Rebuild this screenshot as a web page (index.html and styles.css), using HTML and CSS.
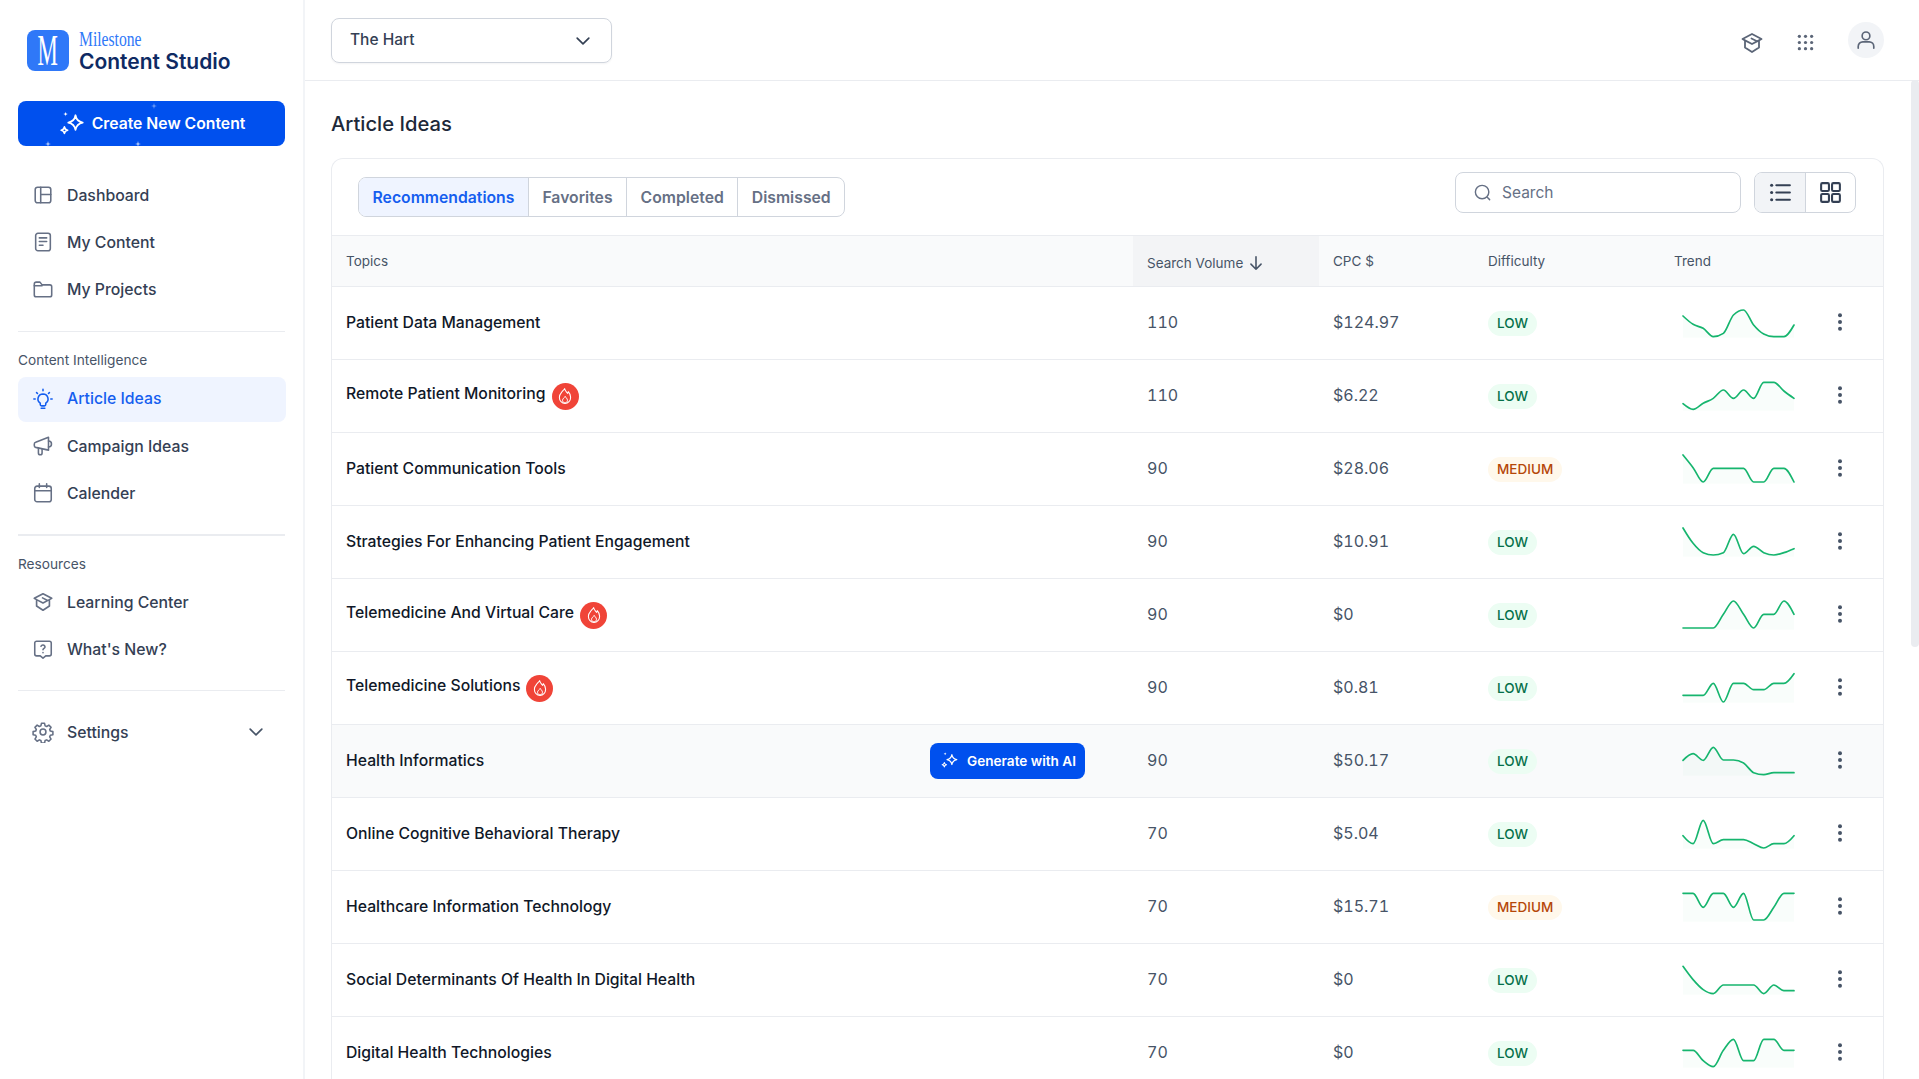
FILE: index.html
```html
<!DOCTYPE html>
<html lang="en">
<head>
    <meta charset="UTF-8">
    <meta name="viewport" content="width=device-width, initial-scale=1.0">
    <title>Article Ideas - Content Studio</title>
    <link rel="stylesheet" href="styles.css">
</head>
<body>
    <svg class="sprite" width="0" height="0">
        <symbol id="i-sparkles" viewBox="0 0 24 24">
            <path d="M15 4.500c.7 3.900 2.300 5.600 6.200 6.300-3.900.7-5.500 2.400-6.200 6.300-.7-3.900-2.300-5.600-6.200-6.300 3.900-.7 5.500-2.400 6.200-6.300z" fill="none" stroke="currentColor" stroke-width="1.500" stroke-linejoin="round"/>
            <path d="M5.500 14.500c.3 1.800 1 2.500 2.800 2.800-1.800.3-2.500 1-2.800 2.800-.3-1.800-1-2.500-2.800-2.800 1.800-.3 2.500-1 2.800-2.800z" fill="none" stroke="currentColor" stroke-width="1.400" stroke-linejoin="round"/>
            <path d="M6.500 1.500c.2 1.300.7 1.800 2 2-1.300.2-1.800.7-2 2-.2-1.300-.7-1.800-2-2 1.300-.2 1.800-.7 2-2z" fill="currentColor"/>
        </symbol>
        <symbol id="i-cap" viewBox="0 0 24 24">
            <path d="M2.500 8 12 3l9.500 5-2.500 1.400v7L12 21l-7-4.600v-7z M5 9.400 12 13l7-3.600 M17 10.300 11.500 7.500" fill="none" stroke="currentColor" stroke-width="1.800" stroke-linejoin="round" stroke-linecap="round"/>
        </symbol>
        <symbol id="i-chevron" viewBox="0 0 24 24">
            <path d="M5 8.500l7 7 7-7" fill="none" stroke="currentColor" stroke-width="2" stroke-linecap="round" stroke-linejoin="round"/>
        </symbol>
        <symbol id="i-flame" viewBox="0 0 24 24">
            <path d="M11.500 2C12 5 14 6.500 15.500 8.500c.5-.6.8-1.300.9-2.300 1.800 2 3.100 4.300 3.100 7.300 0 4.700-3.300 8.500-7.500 8.500s-7.500-3.800-7.500-8.500c0-3 1.700-5 3.200-6.800 1.700-2 3.500-3.400 3.800-4.700z" fill="none" stroke="currentColor" stroke-width="1.400" stroke-linejoin="round"/>
            <path d="M12.300 12.500c.5 1.700 3 2.700 3 5.300 0 1.900-1.500 3.300-3.300 3.300s-3.300-1.400-3.300-3.300c0-2.400 2.500-3.300 3.600-5.300z" fill="none" stroke="currentColor" stroke-width="1.300" stroke-linejoin="round"/>
        </symbol>
        <symbol id="i-kebab" viewBox="0 0 16 24">
            <circle cx="8" cy="5.300" r="2" fill="currentColor"/>
            <circle cx="8" cy="12" r="2" fill="currentColor"/>
            <circle cx="8" cy="18.700" r="2" fill="currentColor"/>
        </symbol>
    </svg>

    <div class="app">
        <aside class="sidebar">
            <div class="brand">
                <span class="brand-mark"><span>M</span></span>
                <div class="brand-text">
                    <span class="brand-top">Milestone</span>
                    <span class="brand-name">Content Studio</span>
                </div>
            </div>

            <button class="create-btn">
                <svg class="create-icon"><use href="#i-sparkles"/></svg>
                Create New Content
                <span class="twinkle twinkle-a"></span>
                <span class="twinkle twinkle-b"></span>
                <span class="twinkle twinkle-c"></span>
            </button>

            <nav class="nav nav-first">
                <a class="nav-item">
                    <svg class="nav-icon" viewBox="0 0 24 24"><rect x="3.500" y="3.500" width="17" height="17" rx="2.500"/><path d="M9.500 3.500v17M9.500 11.500h11"/></svg>
                    Dashboard
                </a>
                <a class="nav-item">
                    <svg class="nav-icon" viewBox="0 0 24 24"><rect x="4" y="2.500" width="16" height="19" rx="2.500"/><path d="M8 7.500h8M8 11.500h8M8 15.500h4"/></svg>
                    My Content
                </a>
                <a class="nav-item">
                    <svg class="nav-icon" viewBox="0 0 24 24"><path d="M2.500 6.500a2 2 0 0 1 2-2h4.200l2.300 3h8.500a2 2 0 0 1 2 2v9a2 2 0 0 1-2 2h-15a2 2 0 0 1-2-2z"/><path d="M2.500 8.500h8.500"/></svg>
                    My Projects
                </a>
            </nav>

            <hr class="divider">
            <div class="nav-label">Content Intelligence</div>
            <nav class="nav">
                <a class="nav-item active">
                    <svg class="nav-icon" viewBox="0 0 24 24"><path d="M12 6.500a5.500 5.500 0 0 0-3 10.100V18a1.500 1.500 0 0 0 1.500 1.500h3A1.500 1.500 0 0 0 15 18v-1.400a5.500 5.500 0 0 0-3-10.100z"/><path d="M10 22h4M12 1.500v1.500M2 12h1.500M20.500 12H22M5 5l1 1M19 5l-1 1"/></svg>
                    Article Ideas
                </a>
                <a class="nav-item">
                    <svg class="nav-icon" viewBox="0 0 24 24"><path d="M4 8 18 2.500v14L4 13.500a2 2 0 0 1-1.500-2v-1.500A2 2 0 0 1 4 8z"/><path d="M18 6.500a3.200 3.200 0 0 1 0 6.500M7 14.200v5.300a2 2 0 0 0 4 0v-4.500"/></svg>
                    Campaign Ideas
                </a>
                <a class="nav-item">
                    <svg class="nav-icon" viewBox="0 0 24 24"><rect x="3" y="4.500" width="18" height="17" rx="2.500"/><path d="M3 9.500h18M8 2v4M16 2v4"/></svg>
                    Calender
                </a>
            </nav>

            <hr class="divider divider-thick">
            <div class="nav-label nav-label-tight">Resources</div>
            <nav class="nav">
                <a class="nav-item">
                    <svg class="nav-icon nav-cap"><use href="#i-cap"/></svg>
                    Learning Center
                </a>
                <a class="nav-item">
                    <svg class="nav-icon" viewBox="0 0 24 24"><path d="M5 3.500h14a2 2 0 0 1 2 2v12a2 2 0 0 1-2 2h-4l-3 2.500-3-2.500H5a2 2 0 0 1-2-2v-12a2 2 0 0 1 2-2z"/><path d="M9.800 9a2.300 2.300 0 0 1 4.400.7c0 1.500-2.200 1.800-2.200 3.100"/><path d="M12 15.800v.2"/></svg>
                    What's New?
                </a>
            </nav>

            <hr class="divider divider-last">
            <a class="nav-item settings">
                <svg class="nav-icon" viewBox="0 0 24 24"><circle cx="12" cy="12" r="3.200"/><path d="M10.300 2.500h3.400l.6 2.800 1.700.7 2.400-1.500 2.400 2.400-1.500 2.400.7 1.700 2.800.6v3.400l-2.800.6-.7 1.700 1.500 2.400-2.400 2.400-2.400-1.500-1.700.7-.6 2.800h-3.400l-.6-2.800-1.700-.7-2.400 1.500-2.400-2.400 1.500-2.400-.7-1.700-2.800-.6v-3.400l2.800-.6.7-1.700-1.500-2.400 2.400-2.400 2.400 1.500 1.700-.7z"/></svg>
                Settings
                <svg class="settings-chevron"><use href="#i-chevron"/></svg>
            </a>
        </aside>

        <div class="main">
            <header class="topbar">
                <div class="site-select">
                    The Hart
                    <svg class="site-chevron"><use href="#i-chevron"/></svg>
                </div>
                <div class="topbar-actions">
                    <svg class="top-icon"><use href="#i-cap"/></svg>
                    <svg class="top-icon grid-icon" viewBox="0 0 18 18">
                        <circle cx="2.500" cy="2.500" r="1.700"/><circle cx="9" cy="2.500" r="1.700"/><circle cx="15.500" cy="2.500" r="1.700"/>
                        <circle cx="2.500" cy="9" r="1.700"/><circle cx="9" cy="9" r="1.700"/><circle cx="15.500" cy="9" r="1.700"/>
                        <circle cx="2.500" cy="15.500" r="1.700"/><circle cx="9" cy="15.500" r="1.700"/><circle cx="15.500" cy="15.500" r="1.700"/>
                    </svg>
                    <div class="avatar">
                        <svg viewBox="0 0 24 24"><circle cx="12" cy="7.500" r="4.200"/><path d="M3.500 21v-2a5 5 0 0 1 5-5h7a5 5 0 0 1 5 5v2"/></svg>
                    </div>
                </div>
            </header>

            <main class="content">
                <h1 class="page-title">Article Ideas</h1>
                <section class="card">
                    <div class="toolbar">
                        <div class="tabs">
                            <span class="tab active">Recommendations</span>
                            <span class="tab">Favorites</span>
                            <span class="tab">Completed</span>
                            <span class="tab">Dismissed</span>
                        </div>
                        <div class="search">
                            <svg class="search-icon" viewBox="0 0 24 24"><circle cx="11.500" cy="11.500" r="8.500"/><path d="M18 18l3 3"/></svg>
                            Search
                        </div>
                        <div class="view-toggle">
                            <span class="view-btn active">
                                <svg viewBox="0 0 24 24"><path d="M8 5h13M8 12h13M8 19h13"/><circle cx="3.500" cy="5" r="1.500"/><circle cx="3.500" cy="12" r="1.500"/><circle cx="3.500" cy="19" r="1.500"/></svg>
                            </span>
                            <span class="view-btn">
                                <svg viewBox="0 0 24 24"><rect x="3" y="3" width="7.500" height="7.500" rx="1.200"/><rect x="13.500" y="3" width="7.500" height="7.500" rx="1.200"/><rect x="3" y="13.500" width="7.500" height="7.500" rx="1.200"/><rect x="13.500" y="13.500" width="7.500" height="7.500" rx="1.200"/></svg>
                            </span>
                        </div>
                    </div>

                    <table class="ideas">
                        <colgroup>
                            <col class="col-topic"><col class="col-volume"><col class="col-cpc"><col class="col-difficulty"><col class="col-trend"><col>
                        </colgroup>
                        <thead>
                            <tr>
                                <th>Topics</th>
                                <th class="sorted"><span class="sort-label">Search Volume
                                    <svg viewBox="0 0 16 16"><path d="M8 2.500v11M3.500 9 8 13.500 12.500 9"/></svg></span></th>
                                <th>CPC $</th>
                                <th>Difficulty</th>
                                <th>Trend</th>
                                <th></th>
                            </tr>
                        </thead>
                        <tbody>
                            <tr>
                                <td class="topic">Patient Data Management</td>
                                <td class="num">110</td>
                                <td class="num">$124.97</td>
                                <td><span class="pill low">LOW</span></td>
                                <td class="trend"><svg class="spark" viewBox="0 0 333 96" data-points="27,52,64,89,79,24,9,54,81,89,89,54"></svg></td>
                                <td class="more"><svg><use href="#i-kebab"/></svg></td>
                            </tr>
                            <tr>
                                <td class="topic"><div class="topic-hot">Remote Patient Monitoring <span class="hot"><svg><use href="#i-flame"/></svg></span></div></td>
                                <td class="num">110</td>
                                <td class="num">$6.22</td>
                                <td><span class="pill low">LOW</span></td>
                                <td class="trend"><svg class="spark" viewBox="0 0 333 96" data-points="71,88,70,55,30,55,30,55,7,7,33,55"></svg></td>
                                <td class="more"><svg><use href="#i-kebab"/></svg></td>
                            </tr>
                            <tr>
                                <td class="topic">Patient Communication Tools</td>
                                <td class="num">90</td>
                                <td class="num">$28.06</td>
                                <td><span class="pill medium">MEDIUM</span></td>
                                <td class="trend"><svg class="spark" viewBox="0 0 333 96" data-points="6,44,87,46,46,46,46,87,87,46,46,87"></svg></td>
                                <td class="more"><svg><use href="#i-kebab"/></svg></td>
                            </tr>
                            <tr>
                                <td class="topic">Strategies For Enhancing Patient Engagement</td>
                                <td class="num">90</td>
                                <td class="num">$10.91</td>
                                <td><span class="pill low">LOW</span></td>
                                <td class="trend"><svg class="spark" viewBox="0 0 333 96" data-points="6,52,80,87,80,25,83,61,80,87,80,68"></svg></td>
                                <td class="more"><svg><use href="#i-kebab"/></svg></td>
                            </tr>
                            <tr>
                                <td class="topic"><div class="topic-hot">Telemedicine And Virtual Care <span class="hot"><svg><use href="#i-flame"/></svg></span></div></td>
                                <td class="num">90</td>
                                <td class="num">$0</td>
                                <td><span class="pill low">LOW</span></td>
                                <td class="trend"><svg class="spark" viewBox="0 0 333 96" data-points="87,87,87,87,46,6,46,87,46,46,6,46"></svg></td>
                                <td class="more"><svg><use href="#i-kebab"/></svg></td>
                            </tr>
                            <tr>
                                <td class="topic"><div class="topic-hot">Telemedicine Solutions <span class="hot"><svg><use href="#i-flame"/></svg></span></div></td>
                                <td class="num">90</td>
                                <td class="num">$0.81</td>
                                <td><span class="pill low">LOW</span></td>
                                <td class="trend"><svg class="spark" viewBox="0 0 333 96" data-points="70,70,70,34,90,34,34,53,53,34,34,5"></svg></td>
                                <td class="more"><svg><use href="#i-kebab"/></svg></td>
                            </tr>
                            <tr class="hovered">
                                <td class="topic"><div class="topic-action">Health Informatics
                                    <button class="generate-btn"><svg><use href="#i-sparkles"/></svg>Generate with AI</button></div></td>
                                <td class="num">90</td>
                                <td class="num">$50.17</td>
                                <td><span class="pill low">LOW</span></td>
                                <td class="trend"><svg class="spark" viewBox="0 0 333 96" data-points="46,26,46,7,45,45,54,83,89,83,83,83"></svg></td>
                                <td class="more"><svg><use href="#i-kebab"/></svg></td>
                            </tr>
                            <tr>
                                <td class="topic">Online Cognitive Behavioral Therapy</td>
                                <td class="num">70</td>
                                <td class="num">$5.04</td>
                                <td><span class="pill low">LOW</span></td>
                                <td class="trend"><svg class="spark" viewBox="0 0 333 96" data-points="53,77,7,77,65,65,65,77,90,77,77,53"></svg></td>
                                <td class="more"><svg><use href="#i-kebab"/></svg></td>
                            </tr>
                            <tr>
                                <td class="topic">Healthcare Information Technology</td>
                                <td class="num">70</td>
                                <td class="num">$15.71</td>
                                <td><span class="pill medium">MEDIUM</span></td>
                                <td class="trend"><svg class="spark" viewBox="0 0 333 96" data-points="7,7,49,7,7,49,7,87,87,49,7,7"></svg></td>
                                <td class="more"><svg><use href="#i-kebab"/></svg></td>
                            </tr>
                            <tr>
                                <td class="topic">Social Determinants Of Health In Digital Health</td>
                                <td class="num">70</td>
                                <td class="num">$0</td>
                                <td><span class="pill low">LOW</span></td>
                                <td class="trend"><svg class="spark" viewBox="0 0 333 96" data-points="7,47,77,89,63,63,63,63,89,63,80,80"></svg></td>
                                <td class="more"><svg><use href="#i-kebab"/></svg></td>
                            </tr>
                            <tr>
                                <td class="topic">Digital Health Technologies</td>
                                <td class="num">70</td>
                                <td class="num">$0</td>
                                <td><span class="pill low">LOW</span></td>
                                <td class="trend"><svg class="spark" viewBox="0 0 333 96" data-points="40,40,71,89,40,7,71,71,7,7,40,40"></svg></td>
                                <td class="more"><svg><use href="#i-kebab"/></svg></td>
                            </tr>
                        </tbody>
                    </table>
                </section>
            </main>
            <div class="scroll-thumb"></div>
        </div>
    </div>
    <script src="sparkline.js"></script>
</body>
</html>
```

FILE: styles.css
```css
* {
    box-sizing: border-box;
}

html, body {
    height: 100%;
}

body {
    margin: 0;
    background-color: #fff;
    color: #101828;
    font-family: Inter, "Noto Sans", sans-serif;
    overflow: hidden;
}

.sprite {
    position: absolute;
}

.app {
    display: flex;
    height: 100vh;
}

/* sidebar */
.sidebar {
    flex: 0 0 305px;
    width: 305px;
    padding: 29px 18px 0;
    border-right: 2px solid #f2f4f7;
}

.brand {
    display: flex;
    align-items: flex-start;
    gap: 10px;
    padding-left: 9px;
}

.brand-mark {
    width: 42px;
    height: 41px;
    margin-top: 1px;
    border-radius: 8px;
    background-color: #2f78f8;
    color: #fff;
    font-family: "Liberation Serif", serif;
    font-size: 44px;
    line-height: 41px;
    text-align: center;
}

.brand-mark span {
    display: inline-block;
    transform: scaleX(0.52);
}

.brand-text {
    display: flex;
    flex-direction: column;
}

.brand-top {
    height: 20px;
    color: #2f78f8;
    font-family: "Liberation Serif", serif;
    font-size: 22px;
    line-height: 20px;
    transform: scaleX(0.71);
    transform-origin: left center;
}

.brand-name {
    color: #0e2a63;
    font-size: 21px;
    font-weight: 600;
    line-height: 25px;
}

.create-btn {
    position: relative;
    display: flex;
    align-items: center;
    justify-content: center;
    gap: 6px;
    width: 267px;
    height: 45px;
    margin-top: 27px;
    border: none;
    border-radius: 8px;
    background-color: #0050ee;
    color: #fff;
    font-family: inherit;
    font-size: 15.750px;
    font-weight: 600;
}

.create-icon {
    width: 28px;
    height: 28px;
}

.twinkle {
    position: absolute;
    width: 6px;
    height: 6px;
    background-color: #7ea6f7;
    clip-path: polygon(50% 0, 60% 40%, 100% 50%, 60% 60%, 50% 100%, 40% 60%, 0 50%, 40% 40%);
}

.twinkle-a {
    left: 27px;
    bottom: -1px;
    background-color: #cfdefc;
}

.twinkle-b {
    left: 117px;
    bottom: -1px;
    background-color: #cfdefc;
}

.twinkle-c {
    left: 133px;
    top: 2px;
}

.nav {
    display: flex;
    flex-direction: column;
    gap: 3px;
}

.nav-first {
    margin-top: 27px;
}

.nav-item {
    display: flex;
    align-items: center;
    gap: 13px;
    height: 44px;
    padding-left: 14px;
    border-radius: 8px;
    color: #344054;
    font-size: 15.800px;
    font-weight: 450;
}

.nav-icon {
    flex: 0 0 22px;
    width: 22px;
    height: 22px;
    fill: none;
    stroke: #667085;
    stroke-width: 1.700;
    stroke-linecap: round;
    stroke-linejoin: round;
    color: #667085;
}

.nav-cap {
    stroke: none;
}

.nav-item.active {
    height: 45px;
    margin: 0 -1px -1px 0;
    padding-bottom: 2px;
    background-color: #eff4ff;
    color: #155eef;
}

.nav-item.active .nav-icon {
    stroke: #155eef;
}

.divider {
    height: 1px;
    margin: 20px 0 0;
    border: none;
    background-color: #eaecf0;
}

.divider-thick {
    height: 2px;
    margin-top: 19px;
}

.divider-last {
    margin-top: 19px;
}

.nav-label {
    margin: 20px 0 8px;
    color: #475467;
    font-size: 13.700px;
    font-weight: 400;
    line-height: 17px;
}

.nav-label-tight {
    margin-bottom: 7px;
}

.settings {
    margin-top: 19px;
}

.settings-chevron {
    width: 20px;
    height: 20px;
    margin-left: auto;
    margin-right: 19px;
    color: #475467;
}

/* main column */
.main {
    position: relative;
    flex: 1;
    display: flex;
    flex-direction: column;
    min-width: 0;
}

.topbar {
    flex: 0 0 81px;
    display: flex;
    align-items: flex-start;
    justify-content: space-between;
    padding: 18px 35px 0 26px;
    border-bottom: 1px solid #eaecf0;
}

.site-select {
    display: flex;
    align-items: center;
    justify-content: space-between;
    width: 281px;
    height: 45px;
    padding: 0 18px 2px;
    border: 1px solid #d0d5dd;
    border-radius: 8px;
    box-shadow: 0 1px 2px rgba(16, 24, 40, 0.05);
    color: #344054;
    font-size: 15.500px;
    font-weight: 500;
}

.site-chevron {
    width: 20px;
    height: 20px;
    margin-top: 2px;
    color: #344054;
}

.topbar-actions {
    display: flex;
    align-items: center;
    margin-top: 4px;
}

.top-icon {
    width: 24px;
    height: 24px;
    margin-top: 5px;
    color: #5b6577;
}

.grid-icon {
    width: 17px;
    height: 17px;
    margin-left: 33px;
    fill: #5b6577;
}

.avatar {
    display: flex;
    align-items: center;
    justify-content: center;
    width: 36px;
    height: 36px;
    margin-left: 34px;
    border-radius: 50%;
    background-color: #f2f4f7;
}

.avatar svg {
    width: 22px;
    height: 22px;
    fill: none;
    stroke: #5b6577;
    stroke-width: 1.800;
    stroke-linecap: round;
}

.content {
    flex: 1;
    min-height: 0;
    padding: 0 35px 0 26px;
    overflow: hidden;
}

/* drawn by hand, the browser hides its own bar */
.scroll-thumb {
    position: absolute;
    top: 80px;
    right: 0;
    width: 8px;
    height: 567px;
    border-radius: 4px;
    background-color: #eaecf0;
}

.page-title {
    margin: 30px 0 0;
    color: #1d2939;
    font-size: 20.200px;
    font-weight: 500;
    line-height: 26px;
}

.card {
    margin-top: 21px;
    border: 1px solid #eaecf0;
    border-bottom: none;
    border-radius: 12px 12px 0 0;
    overflow: hidden;
}

.toolbar {
    display: flex;
    align-items: flex-start;
    height: 76px;
    padding: 13px 27px 0 27px;
}

.tabs {
    display: flex;
    height: 40px;
    margin-top: 5px;
    margin-left: -1px;
    border: 1px solid #d0d5dd;
    border-radius: 8px;
    overflow: hidden;
}

.tab {
    padding: 0 13.500px;
    border-left: 1px solid #d0d5dd;
    color: #667085;
    font-size: 15.750px;
    font-weight: 600;
    line-height: 39px;
}

.tab:first-child {
    border-left: none;
}

.tab.active {
    background-color: #eff4ff;
    color: #155eef;
}

.search {
    display: flex;
    align-items: center;
    gap: 10px;
    width: 286px;
    height: 41px;
    margin-left: auto;
    padding-left: 17px;
    border: 1px solid #d0d5dd;
    border-radius: 8px;
    color: #667085;
    font-size: 15.500px;
}

.search-icon {
    width: 19px;
    height: 19px;
    fill: none;
    stroke: #667085;
    stroke-width: 1.800;
    stroke-linecap: round;
}

.view-toggle {
    display: flex;
    height: 41px;
    margin-left: 13px;
    border: 1px solid #d0d5dd;
    border-radius: 8px;
    overflow: hidden;
}

.view-btn {
    display: flex;
    align-items: center;
    justify-content: center;
    width: 50px;
}

.view-btn + .view-btn {
    border-left: 1px solid #d0d5dd;
}

.view-btn.active {
    background-color: #f2f4f7;
}

.view-btn svg {
    width: 25px;
    height: 25px;
    fill: none;
    stroke: #344054;
    stroke-width: 2;
    stroke-linecap: round;
}

.view-btn circle {
    fill: #344054;
    stroke: none;
}

/* table */
.ideas {
    width: 100%;
    border-spacing: 0;
    table-layout: fixed;
}

.col-topic {
    width: 801px;
}

.col-volume {
    width: 186px;
}

.col-cpc {
    width: 155px;
}

.col-difficulty {
    width: 186px;
}

.col-trend {
    width: 150px;
}

.ideas th {
    height: 52px;
    padding: 0 14px 1px;
    border-top: 1px solid #eaecf0;
    border-bottom: 1px solid #eaecf0;
    background-color: #f9fafb;
    color: #475467;
    font-size: 13.500px;
    font-weight: 400;
    text-align: left;
}

.ideas th.sorted {
    padding: 3px 14px 0;
    background-color: #f3f4f6;
}

.sort-label {
    display: inline-flex;
    align-items: center;
    gap: 4px;
}

.sort-label svg {
    width: 18px;
    height: 18px;
    fill: none;
    stroke: #475467;
    stroke-width: 1.400;
    stroke-linecap: round;
    stroke-linejoin: round;
}

.ideas td {
    height: 73px;
    padding: 0 14px;
    border-bottom: 1px solid #eaecf0;
}

.ideas .hovered td {
    background-color: #f9fafb;
}

.ideas td.topic {
    padding-bottom: 1px;
    color: #101828;
    font-size: 15.750px;
    font-weight: 450;
}

.topic-hot {
    display: flex;
    align-items: center;
    gap: 6px;
    padding-bottom: 4px;
    line-height: 20px;
}

.hot {
    display: flex;
    align-items: center;
    justify-content: center;
    width: 27px;
    height: 27px;
    margin-bottom: -5px;
    border-radius: 50%;
    background-color: #f04438;
    color: #fff;
}

.hot svg {
    width: 18px;
    height: 18px;
}

.topic-action {
    display: flex;
    align-items: center;
    justify-content: space-between;
    padding-right: 34px;
}

.generate-btn {
    display: flex;
    align-items: center;
    gap: 8px;
    width: 155px;
    height: 36px;
    padding: 0 0 0 10px;
    border: none;
    border-radius: 8px;
    background-color: #0050ee;
    color: #fff;
    font-family: inherit;
    font-size: 13.600px;
    font-weight: 600;
}

.generate-btn svg {
    width: 19px;
    height: 19px;
}

.ideas td.num {
    padding-bottom: 2px;
    color: #475467;
    font-size: 16px;
    font-variant-numeric: tabular-nums;
}

.pill {
    display: inline-block;
    height: 25px;
    padding: 0 9px;
    border-radius: 13px;
    font-size: 13.500px;
    font-weight: 500;
    line-height: 25px;
}

.pill.low {
    background-color: #ecfdf3;
    color: #05704a;
}

.pill.medium {
    background-color: #fff8eb;
    color: #b54708;
}

.ideas td.trend {
    padding: 0 0 0 23px;
}

.spark {
    display: block;
    width: 111px;
    height: 32px;
    overflow: visible;
}

.spark-area {
    fill: #12b76a;
    opacity: 0.025;
}

.spark-line {
    fill: none;
    stroke: #16b56e;
    stroke-width: 5;
    stroke-linecap: round;
    stroke-linejoin: round;
}

.ideas td.more {
    padding: 0 0 3px 22px;
    color: #475467;
}

.more svg {
    display: block;
    width: 16px;
    height: 24px;
}
```

FILE: sparkline.js
```js
// draws the trend charts from the numbers in data-points (monotone curve)
const SVG_NS = 'http://www.w3.org/2000/svg';
const CHART_WIDTH = 333;
const CHART_BOTTOM = 92;

function getTangents(points, step) {
    const slopes = [];
    for (let i = 0; i < points.length - 1; i++) {
        slopes.push((points[i + 1] - points[i]) / step);
    }
    const tangents = [];
    for (let i = 1; i < points.length - 1; i++) {
        const a = slopes[i - 1];
        const b = slopes[i];
        if (a * b <= 0) {
            tangents[i] = 0;
        } else {
            tangents[i] = Math.sign(a) * Math.min(2 * Math.abs(a), 2 * Math.abs(b), Math.abs(a + b) / 2);
        }
    }
    tangents[0] = (3 * slopes[0] - tangents[1]) / 2;
    tangents[points.length - 1] = (3 * slopes[slopes.length - 1] - tangents[points.length - 2]) / 2;
    return tangents;
}

function getCurve(points) {
    const step = CHART_WIDTH / (points.length - 1);
    const tangents = getTangents(points, step);
    let d = `M0 ${points[0]}`;
    for (let i = 0; i < points.length - 1; i++) {
        const x = i * step;
        d += ` C${x + step / 3} ${points[i] + tangents[i] * step / 3}`;
        d += ` ${x + 2 * step / 3} ${points[i + 1] - tangents[i + 1] * step / 3}`;
        d += ` ${x + step} ${points[i + 1]}`;
    }
    return d;
}

document.querySelectorAll('.spark').forEach(svg => {
    const points = svg.dataset.points.split(',').map(Number);
    const curve = getCurve(points);

    const area = document.createElementNS(SVG_NS, 'path');
    area.setAttribute('class', 'spark-area');
    area.setAttribute('d', `${curve} L${CHART_WIDTH} ${CHART_BOTTOM} L0 ${CHART_BOTTOM} Z`);
    svg.appendChild(area);

    const line = document.createElementNS(SVG_NS, 'path');
    line.setAttribute('class', 'spark-line');
    line.setAttribute('d', curve);
    svg.appendChild(line);
});
```
